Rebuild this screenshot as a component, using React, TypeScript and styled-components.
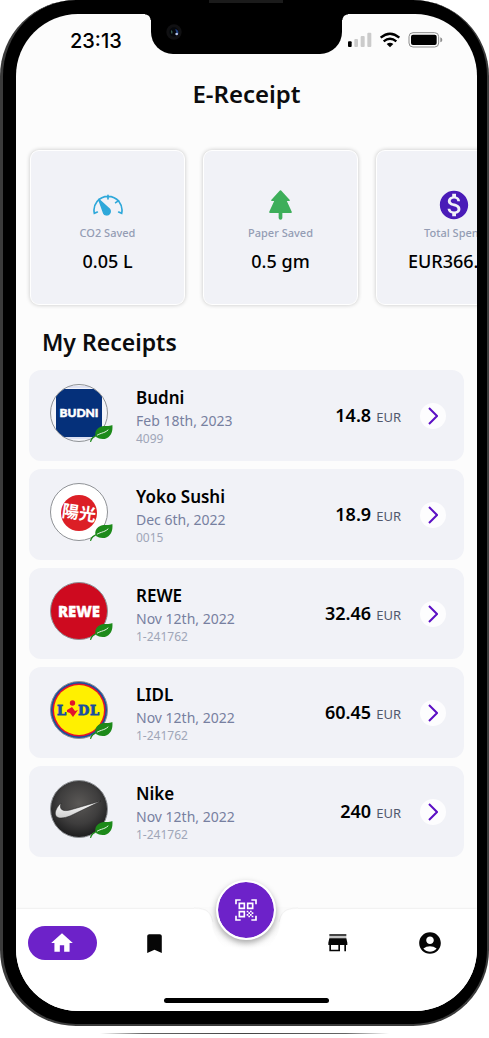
import React from "react";
import styled, { createGlobalStyle } from "styled-components";
import { MdAccountCircle, MdBookmark, MdHome, MdMonetizationOn } from "react-icons/md";

const GlobalStyle = createGlobalStyle`
  *, *::before, *::after { box-sizing: border-box; }
  body {
    margin: 0;
    background: #ffffff;
    color: #0c0c0e;
    font-family: "Noto Sans", sans-serif;
  }
  h1, h2, h3, p { margin: 0; }
  button { border: 0; padding: 0; background: none; color: inherit; font: inherit; cursor: pointer; }
`;

const Stage = styled.div`
  display: flex;
  flex-direction: column;
  overflow: hidden;
`;

const Phone = styled.div`
  position: relative;
  padding: 14px 10px 13px 13px;
  background: #000000;
  border: solid #3b3b3b;
  border-width: 0 2px 2px 3px;
  border-radius: 76px;
`;

const Speaker = styled.div`
  position: absolute;
  top: 0;
  left: 50%;
  width: 74px;
  height: 3px;
  margin-left: -36px;
  background: #1b1b1b;
`;

const Screen = styled.div`
  display: flex;
  flex-direction: column;
  overflow: hidden;
  background: #fcfcfc;
  border-radius: 62px;
`;

const StatusBar = styled.div`
  display: grid;
  grid-template-columns: 1fr 191px 1fr;
  height: 40px;
`;

const Time = styled.time`
  padding: 15px 0 0 54px;
  font-family: Inter, sans-serif;
  font-size: 20px;
  line-height: 24px;
  font-weight: 500;
  color: #000000;
`;

const Notch = styled.div`
  position: relative;
  background: #000000;
  border-radius: 0 0 22px 22px;
  &::before, &::after {
    content: "";
    position: absolute;
    top: 0;
    width: 6px;
    height: 6px;
  }
  &::before { left: -6px; background: radial-gradient(circle at 0 100%, transparent 5px, #000000 6px); }
  &::after { right: -6px; background: radial-gradient(circle at 100% 100%, transparent 5px, #000000 6px); }
`;

const Camera = styled.svg`
  display: block;
  width: 16px;
  height: 16px;
  margin: 10px 0 0 15px;
`;

const StatusIcons = styled.div`
  display: flex;
  justify-content: flex-end;
  padding: 18px 34px 0 0;
`;

const Title = styled.h1`
  margin-top: 25px;
  text-align: center;
  font-size: 24px;
  line-height: 30px;
  font-weight: 600;
`;

const Stats = styled.section`
  display: flex;
  gap: 18px;
  margin-top: 32px;
  padding: 9px 14px;
  overflow: hidden;
`;

const StatCard = styled.div`
  display: flex;
  flex: none;
  flex-direction: column;
  align-items: center;
  width: 155px;
  height: 155px;
  padding-top: 37px;
  background: #f1f2f7;
  border: 1px solid #ffffff;
  border-radius: 9px;
  box-shadow: 0 0 4px rgba(0, 0, 0, 0.22);
`;

const StatIcon = styled.div`
  display: flex;
  align-items: center;
  justify-content: center;
  height: 34px;
`;

const StatLabel = styled.p`
  margin-top: 3px;
  font-size: 11px;
  line-height: 16px;
  font-weight: 500;
  color: #949db4;
`;

const StatValue = styled.p`
  margin-top: 8px;
  font-size: 18px;
  line-height: 24px;
  font-weight: 500;
  color: #000000;
`;

const Receipts = styled.section`
  padding: 13px 13px 52px;
`;

const SectionTitle = styled.h2`
  padding-left: 13px;
  font-size: 23px;
  line-height: 30px;
  font-weight: 600;
`;

const List = styled.ul`
  display: flex;
  flex-direction: column;
  gap: 8px;
  margin: 13px 0 0;
  padding: 0;
  list-style: none;
`;

const Row = styled.li`
  display: flex;
  align-items: center;
  height: 91px;
  padding: 0 18px 0 21px;
  background: #f1f2f7;
  border-radius: 12px;
`;

const Avatar = styled.div`
  position: relative;
  width: 58px;
  height: 58px;
  margin-bottom: 6px;
`;

const Logo = styled.svg`
  display: block;
  width: 58px;
  height: 58px;
`;

const Leaf = styled.svg`
  position: absolute;
  right: -5px;
  bottom: 0;
  width: 23px;
  height: 17px;
`;

const Details = styled.div`
  flex: 1;
  margin-left: 28px;
`;

const Store = styled.h3`
  font-size: 17px;
  line-height: 24px;
  font-weight: 600;
  color: #000000;
`;

const DateText = styled.p`
  font-size: 14px;
  line-height: 22px;
  color: #7780a0;
`;

const Reference = styled.p`
  font-size: 12px;
  line-height: 14px;
  color: #a0a6b8;
`;

const Amount = styled.p`
  display: flex;
  align-items: baseline;
  gap: 5px;
  font-size: 18px;
  line-height: 24px;
  font-weight: 600;
  color: #000000;
`;

const Currency = styled.span`
  font-size: 13px;
  font-weight: 400;
  color: #50586c;
`;

const OpenButton = styled.button`
  display: flex;
  align-items: center;
  justify-content: center;
  width: 26px;
  height: 26px;
  margin-left: 19px;
  background: #fdfdfe;
  border-radius: 50%;
`;

const TabBar = styled.nav`
  position: relative;
  height: 102px;
  background: #ffffff;
  box-shadow: 0 0 2px rgba(0, 0, 0, 0.12);
`;

const Cutout = styled.svg`
  position: absolute;
  top: -2px;
  left: 50%;
  width: 104px;
  height: 40px;
  margin-left: -53px;
`;

const Tabs = styled.div`
  position: relative;
  display: grid;
  grid-template-columns: repeat(5, 1fr);
  justify-items: center;
  padding: 17px 1px 0 0;
`;

const Tab = styled.button<{ $active?: boolean }>`
  display: flex;
  align-items: center;
  justify-content: center;
  width: 69px;
  height: 34px;
  border-radius: 17px;
  background: ${(p) => (p.$active ? "#6d22c9" : "transparent")};
  color: ${(p) => (p.$active ? "#ffffff" : "#060606")};
`;

const ScanButton = styled.button`
  position: relative;
  display: flex;
  align-items: center;
  justify-content: center;
  width: 60px;
  height: 60px;
  margin: -46px 0 -14px;
  background: #6d22c9;
  background-clip: padding-box;
  border: 2px solid #ffffff;
  border-radius: 50%;
  box-shadow: 0 3px 6px rgba(0, 0, 0, 0.34);
`;

const HomeIndicator = styled.div`
  width: 165px;
  height: 5px;
  margin: 38px auto 0;
  background: #000000;
  border-radius: 3px;
`;

const Ground = styled.div`
  height: 1px;
  margin: 7px 100px 4px;
  background: linear-gradient(90deg, transparent, #666666 15%, #444444 50%, #666666 85%, transparent);
`;

const GaugeIcon = () => (
  <svg width="32" height="22" viewBox="0 0 96 66" fill="none" stroke="#2ea8da" strokeWidth="5" strokeLinecap="round" aria-hidden="true">
    <path d="M16 54 7 58A42 42 0 1 1 89 58L80 54M48 4V15M80 20 71 26" />
    <path d="M20 16 53 46A10 10 0 1 1 35 58Z" fill="#2ea8da" strokeWidth="4" strokeLinejoin="round" />
  </svg>
);

const TreeIcon = () => (
  <svg width="23" height="30" viewBox="0 0 68 88" fill="#3dae5a" stroke="#3dae5a" strokeWidth="5" strokeLinejoin="round" strokeLinecap="round" aria-hidden="true">
    <path d="M34 3 59 30H49L65 65H3L19 30H9Z" />
    <path d="M34 60V82" strokeWidth="11" />
  </svg>
);

const StoreIcon = () => (
  <svg width="20" height="18" viewBox="0 0 60 54" aria-hidden="true">
    <path d="M4 1H55V5H4Z" fill="#060606" />
    <path d="M4 6H55V13H4Z" fill="#c4c4c4" />
    <path d="M4 13H55L58 26V33H54V52H49V33H36V52H4V33H1V26ZM9 33V47H31V33Z" fill="#060606" fillRule="evenodd" />
  </svg>
);

const ScanIcon = () => (
  <svg width="22" height="22" viewBox="0 0 66 66" fill="none" stroke="#ffffff" strokeWidth="5" aria-hidden="true">
    <path d="M3 16V3H17M49 3H63V16M3 50V63H17M49 63H63V50" />
    <path d="M13 13H28V28H13ZM38 13H53V28H38ZM13 38H28V53H13Z" />
    <path
      fill="#ffffff"
      stroke="none"
      d="M35 35H40V40H35ZM45 35H50V40H45ZM40 40H45V45H40ZM50 40H55V45H50ZM35 45H40V50H35ZM45 45H50V50H45ZM40 50H45V55H40ZM50 50H55V55H50Z"
    />
  </svg>
);

const LeafBadge = () => (
  <Leaf viewBox="0 0 69 51" aria-hidden="true">
    <path d="M67 0C70 24 58 42 38 42 30 42 24 39 18 36 12 24 18 10 32 5 44 1 57 5 67 0Z" fill="#1d8a1a" />
    <path d="M54 15C42 27 28 22 15 36" fill="none" stroke="#e6f2e6" strokeWidth="3" strokeLinecap="round" />
    <path d="M20 32C10 35 4 42 2 49" fill="none" stroke="#1d8a1a" strokeWidth="4" strokeLinecap="round" />
  </Leaf>
);

const Ring = () => <circle cx="29" cy="29" r="28.5" fill="none" stroke="#8f9296" strokeWidth="1" />;

const BudniLogo = () => (
  <Logo viewBox="0 0 58 58" aria-hidden="true">
    <clipPath id="budni"><circle cx="29" cy="29" r="28.5" /></clipPath>
    <g clipPath="url(#budni)">
      <path d="M0 0H58V58H0Z" fill="#f4f5fa" />
      <path d="M4 3H54M4 54H54" stroke="#c5cbea" strokeWidth="1" />
      <path d="M6 5H52V53H6Z" fill="#05307a" />
    </g>
    <text x="29" y="33" textAnchor="middle" fontFamily="Lato, sans-serif" fontWeight="900" fontSize="12" fill="#ffffff" stroke="#ffffff" strokeWidth="0.5">BUDNI</text>
    <Ring />
  </Logo>
);

const YokoLogo = () => (
  <Logo viewBox="0 0 58 58" aria-hidden="true">
    <circle cx="29" cy="29" r="28.5" fill="#ffffff" />
    <circle cx="29" cy="30" r="18" fill="#dc1f26" />
    <text x="29" y="36" textAnchor="middle" fontFamily="'Noto Sans CJK TC', sans-serif" fontWeight="700" fontSize="17" fill="#ffffff" transform="rotate(8 29 30)">陽光</text>
    <Ring />
  </Logo>
);

const ReweLogo = () => (
  <Logo viewBox="0 0 58 58" aria-hidden="true">
    <circle cx="29" cy="29" r="28.5" fill="#ce0a1f" />
    <text x="29" y="35" textAnchor="middle" fontFamily="'Open Sans', sans-serif" fontWeight="800" fontSize="15" fill="#ffffff" stroke="#ffffff" strokeWidth="0.3">REWE</text>
    <Ring />
  </Logo>
);

const LidlLogo = () => (
  <Logo viewBox="0 0 58 58" aria-hidden="true">
    <circle cx="29" cy="29" r="28.5" fill="#174f9f" />
    <circle cx="29" cy="29" r="26.5" fill="#e3132c" />
    <circle cx="29" cy="29" r="25" fill="#fff000" />
    <g fontFamily="'DejaVu Serif', serif" fontWeight="700" fontSize="13" fill="#174f9f" stroke="#174f9f" strokeWidth="0.8">
      <text x="7" y="34">L</text>
      <text x="28" y="34">D</text>
      <text x="40" y="34">L</text>
    </g>
    <circle cx="22.500" cy="22" r="2.700" fill="#e3132c" />
    <path d="M17 29 22 26 25 30 28 29 23 36 20 32 17 31Z" fill="#e3132c" />
    <Ring />
  </Logo>
);

const NikeLogo = () => (
  <Logo viewBox="0 0 58 58" aria-hidden="true">
    <defs>
      <radialGradient id="stone" cx="0.5" cy="0.4" r="0.6">
        <stop offset="0" stopColor="#5a5856" />
        <stop offset="0.6" stopColor="#3e3d3d" />
        <stop offset="1" stopColor="#1d1d1e" />
      </radialGradient>
      <linearGradient id="steel" x1="0" y1="0" x2="0" y2="1">
        <stop offset="0" stopColor="#ffffff" />
        <stop offset="1" stopColor="#cfcfcf" />
      </linearGradient>
    </defs>
    <circle cx="29" cy="29" r="28.5" fill="url(#stone)" />
    <path d="M11 23C3 31 4 38 11 38 14 38 17 37 20 36L51 21 20 30C12 32 9 29 11 23Z" fill="url(#steel)" stroke="#1c1c1c" strokeWidth="0.5" />
    <Ring />
  </Logo>
);

const stats = [
  { label: "CO2 Saved", value: "0.05 L", icon: <GaugeIcon /> },
  { label: "Paper Saved", value: "0.5 gm", icon: <TreeIcon /> },
  { label: "Total Spent", value: "EUR366.61", icon: <MdMonetizationOn size={34} color="#4a1bb8" aria-hidden="true" /> },
];

const receipts = [
  { store: "Budni", date: "Feb 18th, 2023", reference: "4099", amount: "14.8", logo: <BudniLogo /> },
  { store: "Yoko Sushi", date: "Dec 6th, 2022", reference: "0015", amount: "18.9", logo: <YokoLogo /> },
  { store: "REWE", date: "Nov 12th, 2022", reference: "1-241762", amount: "32.46", logo: <ReweLogo /> },
  { store: "LIDL", date: "Nov 12th, 2022", reference: "1-241762", amount: "60.45", logo: <LidlLogo /> },
  { store: "Nike", date: "Nov 12th, 2022", reference: "1-241762", amount: "240", logo: <NikeLogo /> },
];

export default function App() {
  return (
    <Stage>
      <GlobalStyle />
      <Phone>
        <Speaker />
        <Screen>
          <StatusBar>
            <Time>23:13</Time>
            <Notch>
              <Camera viewBox="0 0 48 48" aria-hidden="true">
                <circle cx="24" cy="24" r="23" fill="#101012" />
                <circle cx="24" cy="24" r="14" fill="#05070b" />
                <path d="M17 17Q12 24 18 31Q22 25 17 17Z" fill="#3d6b58" />
                <path d="M28 15Q39 18 37 31Q30 28 28 15Z" fill="#1d3f86" />
                <circle cx="32" cy="30" r="4" fill="#b9c8ec" />
              </Camera>
            </Notch>
            <StatusIcons>
              <svg width="95" height="16" viewBox="0 0 285 48" aria-hidden="true">
                <rect x="0" y="28" width="11" height="17" rx="3" fill="#000000" />
                <rect x="19" y="21" width="11" height="24" rx="3" fill="#cbcbcb" />
                <rect x="38" y="12" width="12" height="33" rx="3" fill="#cbcbcb" />
                <rect x="58" y="2" width="12" height="43" rx="3" fill="#cbcbcb" />
                <g fill="none" stroke="#000000" strokeWidth="7">
                  <path d="M98 17Q126 -7 154 17" />
                  <path d="M107 28Q126 12 145 28" />
                </g>
                <path d="M116 36Q126 28 136 36L126 46Z" fill="#000000" />
                <rect x="183" y="2" width="89" height="43" rx="12" fill="none" stroke="#8d8d8d" strokeWidth="3" />
                <rect x="189" y="8" width="77" height="31" rx="6" fill="#000000" />
                <path d="M277 16Q283 18 283 24T277 31Z" fill="#8d8d8d" />
              </svg>
            </StatusIcons>
          </StatusBar>

          <Title>E-Receipt</Title>

          <Stats>
            {stats.map((s) => (
              <StatCard key={s.label}>
                <StatIcon>{s.icon}</StatIcon>
                <StatLabel>{s.label}</StatLabel>
                <StatValue>{s.value}</StatValue>
              </StatCard>
            ))}
          </Stats>

          <Receipts>
            <SectionTitle>My Receipts</SectionTitle>
            <List>
              {receipts.map((r) => (
                <Row key={r.store}>
                  <Avatar>
                    {r.logo}
                    <LeafBadge />
                  </Avatar>
                  <Details>
                    <Store>{r.store}</Store>
                    <DateText>{r.date}</DateText>
                    <Reference>{r.reference}</Reference>
                  </Details>
                  <Amount>
                    {r.amount}
                    <Currency>EUR</Currency>
                  </Amount>
                  <OpenButton aria-label={`Open ${r.store} receipt`}>
                    <svg width="10" height="18" viewBox="0 0 10 18" fill="none" stroke="#5b0fc4" strokeWidth="2" aria-hidden="true">
                      <path d="M1 1 9 9 1 17" />
                    </svg>
                  </OpenButton>
                </Row>
              ))}
            </List>
          </Receipts>

          <TabBar>
            <Cutout viewBox="0 0 104 40" aria-hidden="true">
              <defs>
                <linearGradient id="recess" x1="0" y1="0" x2="0" y2="1">
                  <stop offset="0.4" stopColor="#fafafa" />
                  <stop offset="0.9" stopColor="#ffffff" />
                </linearGradient>
              </defs>
              <path d="M0 0H104V2C90 2 88 7 86 14A34 34 0 0 1 18 14C16 7 14 2 0 2Z" fill="url(#recess)" />
              <path d="M0 1C14 1 17 6 19 15M104 1C90 1 87 6 85 15" fill="none" stroke="#f1f1f1" strokeWidth="1" />
            </Cutout>
            <Tabs>
              <Tab $active aria-label="Home"><MdHome size={26} /></Tab>
              <Tab aria-label="Saved"><MdBookmark size={25} /></Tab>
              <ScanButton aria-label="Scan receipt"><ScanIcon /></ScanButton>
              <Tab aria-label="Stores"><StoreIcon /></Tab>
              <Tab aria-label="Profile"><MdAccountCircle size={26} /></Tab>
            </Tabs>
            <HomeIndicator />
          </TabBar>
        </Screen>
      </Phone>
      <Ground />
    </Stage>
  );
}
